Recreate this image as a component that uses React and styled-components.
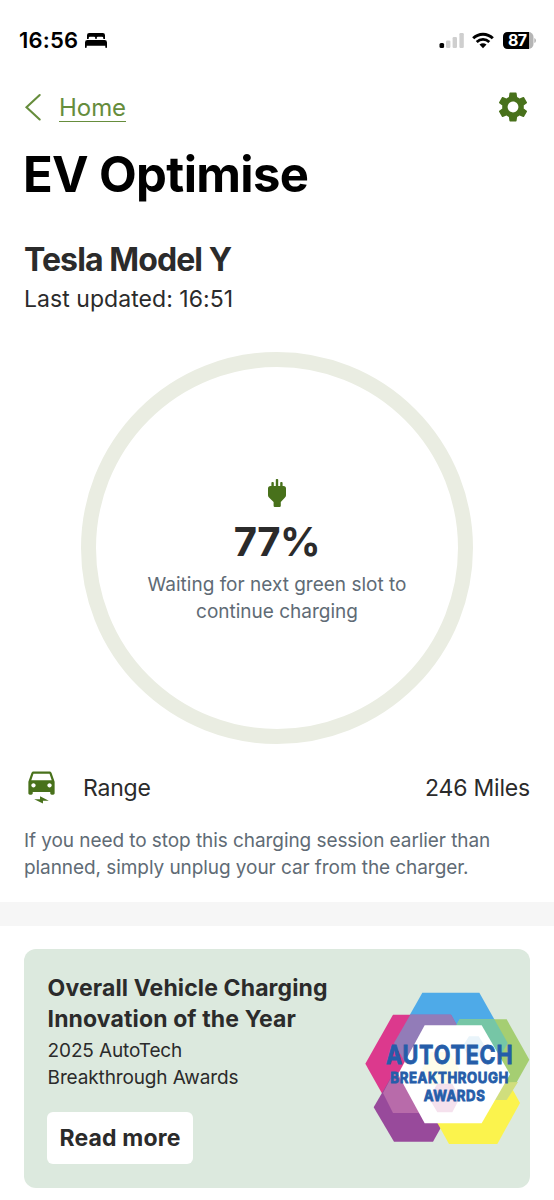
import React from 'react';
import styled, { createGlobalStyle } from 'styled-components';
import { MdSettings, MdElectricCar } from 'react-icons/md';

const GlobalStyle = createGlobalStyle`
  *, *::before, *::after { box-sizing: border-box; }
  body {
    margin: 0;
    background: #fff;
    color: #2b2b2b;
    font-family: Inter, 'Liberation Sans', sans-serif;
  }
  svg { display: block; flex: none; }
  h1, h2, h3, p { margin: 0; }
`;

const Screen = styled.main`
  width: 554px;
  height: 1200px;
  overflow: hidden;
  display: flex;
  flex-direction: column;
`;

const StatusBar = styled.header`
  height: 80px;
  padding: 0 18px 0 19px;
  display: flex;
  align-items: center;
  justify-content: space-between;
  color: #000;
`;

const StatusGroup = styled.div`
  display: flex;
  align-items: center;
  gap: ${(p) => p.$gap}px;
`;

const Clock = styled.span`
  font-size: 22px;
  line-height: 26px;
  font-weight: 600;
  letter-spacing: 0.2px;
`;

const NavBar = styled.nav`
  height: 54px;
  padding: 0 24px;
  display: flex;
  align-items: center;
  justify-content: space-between;
`;

const BackLink = styled.a`
  display: flex;
  align-items: center;
  gap: 17px;
  color: #668d3c;
`;

const BackLabel = styled.span`
  padding-top: 2px;
  font-size: 24px;
  line-height: 26px;
  letter-spacing: -0.05px;
  border-bottom: 1px solid currentColor;
`;

const SettingsButton = styled.button`
  border: 0;
  padding: 0;
  margin-right: -1px;
  background: none;
  color: #48711b;
`;

const PageTitle = styled.h1`
  padding: 11px 24px 0 23px;
  color: #000;
  font-size: 49px;
  line-height: 60px;
  font-weight: 700;
  letter-spacing: -0.65px;
  white-space: nowrap;
`;

const VehicleHeader = styled.section`
  padding: 35px 24px 0;
`;

const VehicleName = styled.h2`
  font-size: 32px;
  line-height: 40px;
  font-weight: 700;
  letter-spacing: -0.9px;
`;

const Updated = styled.p`
  font-size: 23px;
  line-height: 28px;
  padding-top: 5px;
  letter-spacing: 0.05px;
`;

const ChargeRing = styled.section`
  width: 392px;
  height: 392px;
  margin: 39px auto 0;
  border: 15px solid #eaede2;
  border-radius: 50%;
  display: flex;
  flex-direction: column;
  align-items: center;
  padding-top: 112px;
  text-align: center;
`;

const Percent = styled.div`
  margin-top: 11px;
  font-size: 40px;
  line-height: 48px;
  font-weight: 700;
  letter-spacing: -0.5px;
`;

const ChargeStatus = styled.p`
  margin-top: 6px;
  width: 280px;
  color: #606b75;
  font-size: 19px;
  line-height: 26.5px;
`;

const RangeRow = styled.div`
  height: 52px;
  margin-top: 17px;
  padding: 0 24px;
  display: flex;
  align-items: center;
  font-size: 23px;
  line-height: 28px;
  letter-spacing: -0.2px;
`;

const RangeText = styled.span`
  flex: ${(p) => (p.$grow ? 1 : 'none')};
  padding-left: ${(p) => (p.$grow ? 24 : 0)}px;
  padding-top: 1px;
`;

const Hint = styled.p`
  padding: 14px 24px 0;
  height: 89px;
  color: #606b75;
  font-size: 19px;
  line-height: 27px;
  letter-spacing: -0.07px;
  white-space: nowrap;
`;

const Divider = styled.div`
  height: 24px;
  background: #f6f6f6;
`;

const AwardCard = styled.section`
  margin: 23px 24px 0;
  height: 239px;
  padding: 24px 0 0 23px;
  border-radius: 12px;
  background: #dce9de;
  overflow: hidden;
  display: flex;
  justify-content: space-between;
`;

const AwardCopy = styled.div`
  display: flex;
  flex-direction: column;
  align-items: flex-start;
  white-space: nowrap;
`;

const AwardTitle = styled.h3`
  padding-left: 0.6px;
  font-size: 23px;
  line-height: 31px;
  font-weight: 650;
  letter-spacing: 0.12px;
`;

const AwardText = styled.p`
  padding: 3px 0 0 0.6px;
  font-size: 19px;
  line-height: 26.5px;
  letter-spacing: -0.13px;
`;

const ReadMore = styled.button`
  margin-top: 21px;
  width: 146px;
  height: 52px;
  border: 0;
  border-radius: 6px;
  padding: 0;
  background: #fff;
  color: #2b2b2b;
  font: 650 23px/28px Inter, sans-serif;
  letter-spacing: 0.15px;
`;

const LogoSlot = styled.div`
  padding-top: 19px;
`;

const BedIcon = () => (
  <svg width="24" height="17" viewBox="0 0 24 17" fill="currentColor">
    <path d="M3 7V3.2Q3 1 5.2 1H18.8Q21 1 21 3.2V7H19.3V6Q19.3 4.7 18 4.7H14Q12.7 4.7 12.7 6V7H11.3V6Q11.3 4.7 10 4.7H6Q4.7 4.7 4.7 6V7Z" />
    <path d="M3.4 8H20.6Q23 8 23 10.4V15.2Q23 16 22.2 16Q21.3 16 21.3 15.2V13.8H2.7V15.2Q2.7 16 1.8 16Q1 16 1 15.2V10.4Q1 8 3.4 8Z" />
  </svg>
);

const SignalIcon = () => (
  <svg width="26" height="17" viewBox="0 0 26 17">
    <rect x="1.5" y="11" width="4.6" height="5" rx="1.5" fill="#000" />
    <rect x="8" y="8.5" width="4.4" height="7.5" rx="1.2" fill="#cfcfcf" />
    <rect x="14.6" y="5" width="4.4" height="11" rx="1.2" fill="#cfcfcf" />
    <rect x="21.4" y="1" width="4.4" height="15" rx="1.2" fill="#cfcfcf" />
  </svg>
);

const WifiIcon = () => (
  <svg width="22" height="17" viewBox="0 0 22 17" fill="none" stroke="#000">
    <path d="M1.2 6.3Q5.4 2.2 11 2.2T20.8 6.3" strokeWidth="3" />
    <path d="M4.7 10Q7.5 7.4 11 7.4T17.3 10" strokeWidth="2.8" />
    <path d="M7.5 12.6Q11 9.9 14.5 12.6L11 16.2Z" fill="#000" stroke="none" />
  </svg>
);

const BatteryIcon = () => (
  <svg width="34" height="19" viewBox="0 0 34 19">
    <rect x="1" y="1" width="30.5" height="17" rx="5" fill="#b5b5b5" />
    <path d="M6 1H27V18H6Q1 18 1 13V6Q1 1 6 1Z" fill="#000" />
    <path d="M32.3 7Q34 7.5 34 9.5T32.3 12Z" fill="#b5b5b5" />
    <text x="15.5" y="15.2" textAnchor="middle" fontSize="16" fontWeight="700" fill="#fff" textLength="19">87</text>
  </svg>
);

const BackChevron = () => (
  <svg width="18" height="28" viewBox="0 0 18 28" fill="none" stroke="currentColor" strokeWidth="2.1" strokeLinecap="round">
    <path d="M15.7 2L2.5 14.2L15.7 26.5" />
  </svg>
);

const PlugIcon = () => (
  <svg width="18" height="28" viewBox="0 0 18 28" fill="#48711b">
    <path d="M3.4 3.9Q3.4 3.1 4.2 3.1H5Q5.8 3.1 5.8 3.9V7H7.8V.8Q7.8 0 8.6 0H9.4Q10.2 0 10.2 .8V7H12.2V3.9Q12.2 3.1 13 3.1H13.8Q14.6 3.1 14.6 3.9V7H15.5Q18 7 18 9.5V16.2Q18 17.5 17 18.5L12.8 22.9V26.8Q12.8 28 11.6 28H6.8Q5.6 28 5.6 26.8V22.9L1 18.5Q0 17.5 0 16.2V9.5Q0 7 2.5 7H3.4Z" />
  </svg>
);

const AwardLogo = () => (
  <svg width="165" height="153" viewBox="46 35 495 459" fontWeight="700">
    <polygon points="218,37 389,37 474,188 389,338 218,338 133,188" fill="#4eaae8" />
    <polygon points="130,103 304,103 386,250 304,398 130,398 47,250" fill="#dc398d" />
    <polygon points="133,276 250,276 308,381 250,484 133,484 72,381" fill="#984a9b" />
    <polygon points="330,117 471,117 539,238 471,359 330,359 262,238" fill="#a5ce72" />
    <polygon points="298,245 443,245 511,368 443,491 298,491 230,368" fill="#fbf34d" />
    <polygon points="182,103 304,103 386,250 304,338 218,338 133,188" fill="#927cb8" />
    <polygon points="330,117 434,117 474,188 434,260 310,260 286,195" fill="#76c6a6" />
    <polygon points="100,338 133,276 250,276 308,381 298,398 130,398" fill="#b86baa" />
    <polygon points="440,290 467,306 505,305 471,359 420,359" fill="#d0de7d" />
    <polygon points="225,135 396,135 481,282 396,429 225,429 145,282" fill="#fff" />
    <polygon points="358,168 387,168 406,198 387,230 358,230 339,198" fill="#e9f4fa" />
    <polygon points="245,215 300,215 328,265 300,315 245,315 217,265" fill="#fffdeb" />
    <polygon points="263,310 308,310 330,354 308,396 263,396 238,354" fill="#f5e1ed" />
    <g fill="#255da9" stroke="#255da9" strokeWidth="2.5" fontFamily="Inter, sans-serif">
      <text x="109" y="252" fontSize="76" letterSpacing="3" textLength="382" lengthAdjust="spacingAndGlyphs">AUTOTECH</text>
      <text x="122" y="307" fontSize="42" letterSpacing="2" textLength="356" lengthAdjust="spacingAndGlyphs">BREAKTHROUGH</text>
      <text x="222" y="361" fontSize="44" letterSpacing="2" textLength="185" lengthAdjust="spacingAndGlyphs">AWARDS</text>
    </g>
  </svg>
);

export default function App() {
  return (
    <Screen>
      <GlobalStyle />
      <StatusBar>
        <StatusGroup $gap={6}>
          <Clock>16:56</Clock>
          <BedIcon />
        </StatusGroup>
        <StatusGroup $gap={8}>
          <SignalIcon />
          <WifiIcon />
          <BatteryIcon />
        </StatusGroup>
      </StatusBar>
      <NavBar>
        <BackLink>
          <BackChevron />
          <BackLabel>Home</BackLabel>
        </BackLink>
        <SettingsButton aria-label="Settings">
          <MdSettings size={36} />
        </SettingsButton>
      </NavBar>
      <PageTitle>EV Optimise</PageTitle>
      <VehicleHeader>
        <VehicleName>Tesla Model Y</VehicleName>
        <Updated>Last updated: 16:51</Updated>
      </VehicleHeader>
      <ChargeRing>
        <PlugIcon />
        <Percent>77%</Percent>
        <ChargeStatus>Waiting for next green slot to continue charging</ChargeStatus>
      </ChargeRing>
      <RangeRow>
        <MdElectricCar size={35} color="#48711b" />
        <RangeText $grow>Range</RangeText>
        <RangeText>246 Miles</RangeText>
      </RangeRow>
      <Hint>
        If you need to stop this charging session earlier than
        <br />
        planned, simply unplug your car from the charger.
      </Hint>
      <Divider />
      <AwardCard>
        <AwardCopy>
          <AwardTitle>
            Overall Vehicle Charging
            <br />
            Innovation of the Year
          </AwardTitle>
          <AwardText>
            2025 AutoTech
            <br />
            Breakthrough Awards
          </AwardText>
          <ReadMore>Read more</ReadMore>
        </AwardCopy>
        <LogoSlot>
          <AwardLogo />
        </LogoSlot>
      </AwardCard>
    </Screen>
  );
}
